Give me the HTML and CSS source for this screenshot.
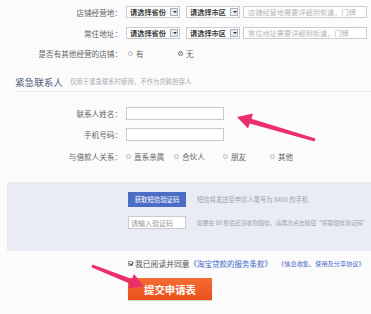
FILE: index.html
```html
<!DOCTYPE html>
<html lang="zh-CN">
<head>
<meta charset="utf-8">
<title>申请表</title>
<link rel="stylesheet" href="styles.css">
</head>
<body>
<div class="page">
  <div class="row r1">
    <div class="label">店铺经营地：</div>
    <div class="sel"><span>请选择省份</span><i class="dd"></i></div>
    <div class="sel sel2"><span>请选择市区</span><i class="dd"></i></div>
    <div class="inp addr ph">店铺经营地需要详细到街道，门牌</div>
  </div>
  <div class="row r2">
    <div class="label">常住地址：</div>
    <div class="sel"><span>请选择省份</span><i class="dd"></i></div>
    <div class="sel sel2"><span>请选择市区</span><i class="dd"></i></div>
    <div class="inp addr ph">常住地址需要详细到街道，门牌</div>
  </div>
  <div class="row r3">
    <div class="label">是否有其他经营的店铺：</div>
    <div class="opt o-yes"><i class="radio"></i>有</div>
    <div class="opt"><i class="radio on"></i>无</div>
  </div>

  <div class="sec-head">
    <span class="sec-title">紧急联系人</span>
    <span class="sec-sub">仅用于紧急联系时使用，不作为贷款担保人</span>
  </div>

  <div class="row r-name">
    <div class="label">联系人姓名：</div>
    <div class="inp short"></div>
  </div>
  <div class="row r-phone">
    <div class="label">手机号码：</div>
    <div class="inp short"></div>
  </div>
  <div class="row r-rel">
    <div class="label">与借款人关系：</div>
    <div class="opt o1"><i class="radio"></i>直系亲属</div>
    <div class="opt o2"><i class="radio"></i>合伙人</div>
    <div class="opt o3"><i class="radio"></i>朋友</div>
    <div class="opt"><i class="radio"></i>其他</div>
  </div>

  <div class="panel">
    <div class="prow">
      <div class="btn-code">获取短信验证码</div>
      <div class="tip">短信将发送至申请人尾号为 8400 的手机</div>
    </div>
    <div class="prow prow2">
      <div class="inp code ph">请输入验证码</div>
      <div class="tip tip2">如果在 60 秒后还没收到短信，请再次点击按钮“获取短信验证码”</div>
    </div>
  </div>

  <div class="agree">
    <i class="check"></i>
    <span class="agree-text">我已阅读并同意</span>
    <span class="link">《淘宝贷款的服务条款》</span>
    <span class="link small">《信息收集、使用及分享协议》</span>
  </div>

  <div class="submit">提交申请表</div>
</div>

<svg class="arrows" width="371" height="314" viewBox="0 0 371 314">
  <polygon fill="#ec2f6b" points="237,117 253,113.5 251.4,118.8 315.5,138.6 314.5,141.4 249.8,123.6 248,128.5"/>
  <polygon fill="#ec2f6b" points="144,286.5 128,288.5 130,283.8 91.4,267.2 92.6,264.6 131.9,279 134,274"/>
</svg>
</body>
</html>
```

FILE: styles.css
```css
* { box-sizing: border-box; margin: 0; padding: 0; }
html, body { width: 371px; height: 314px; overflow: hidden; }
body {
  background: #fbfbfc;
  font-family: "Noto Sans CJK SC", "Noto Sans", sans-serif;
  font-size: 7.6px;
  color: #666;
  position: relative;
}
.page { padding-top: 6px; }
.row { display: flex; align-items: center; height: 12px; white-space: nowrap; }
.label { width: 122px; text-align: right; margin-right: 4px; color: #666; flex: none; }
.r2 { margin-top: 9px; }
.r3 { margin-top: 8px; }

.sel {
  width: 54px; height: 12px; border: 1px solid #c9cbd0; background: #fff;
  display: flex; align-items: center; justify-content: space-between;
  padding-left: 3px; padding-right: 1px; color: #3a3a3a; font-weight: bold; font-size: 7.2px;
}
.sel2 { margin-left: 6px; }
.dd {
  width: 8px; height: 8px; border: 1px solid #aeb1b7; background: #e9eaec; position: relative; flex: none;
}
.dd::after {
  content: ""; position: absolute; left: 1.5px; top: 2px;
  border-left: 2px solid transparent; border-right: 2px solid transparent; border-top: 2.5px solid #333;
}
.inp { height: 12px; border: 1px solid #c9cbd0; background: #fff; display: flex; align-items: center; padding-left: 4px; }
.ph { color: #b3b5ba; font-size: 7.2px; }
.addr { width: 124px; margin-left: 3px; }

.opt { display: flex; align-items: center; color: #666; }
.radio {
  width: 5px; height: 5px; border-radius: 50%; border: 1px solid #b9bcc2; background: #f2f3f5;
  margin-right: 3px; flex: none; position: relative;
}
.radio.on { border-color: #888; background: #6f7580; box-shadow: inset 0 0 0 1px #fff; }
.o-yes { width: 50px; margin-left: 2px; }
.r-rel .opt:first-of-type { margin-left: 4px; }
.o1 { width: 48px; }
.o2 { width: 49px; }
.o3 { width: 47px; }

.sec-head {
  margin: 16px 0 0 15px; height: 17px; padding-bottom: 3px;
  border-bottom: 1px solid #eceef2; display: flex; align-items: center;
}
.sec-title { font-size: 9.6px; color: #4f5f7d; margin-right: 7px; }
.sec-sub { font-size: 6.4px; color: #a8acb4; }

.r-name { margin-top: 15px; height: 13px; }
.r-phone { margin-top: 8px; height: 13px; }
.short { width: 98px; height: 13px; }
.r-rel { margin-top: 9px; }

.panel {
  margin: 20px 0 0 7px; height: 69px; background: #e9ecf2;
  padding: 10px 0 0 121px;
}
.prow { display: flex; align-items: center; white-space: nowrap; height: 15px; }
.prow2 { margin-top: 9px; height: 13px; }
.btn-code {
  width: 58px; height: 15px; background: #4b6dc5; color: #fff; font-size: 6.4px;
  display: flex; align-items: center; justify-content: center; flex: none;
}
.code { width: 58px; height: 13px; color: #999; font-size: 7px; padding-left: 2px; flex: none; }
.tip { font-size: 6.3px; color: #9ea3ad; margin-left: 11px; }
.tip2 { font-size: 5.8px; }

.agree {
  margin: 6px 0 0 128px; height: 12px; display: flex; align-items: center; white-space: nowrap;
}
.check {
  width: 5px; height: 5px; border: 1px solid #9aa0a8; background: #fff; margin-right: 2px; position: relative; flex: none;
}
.check::after {
  content: ""; position: absolute; left: 0.5px; top: -0.5px; width: 1.5px; height: 2.5px;
  border-right: 1px solid #444; border-bottom: 1px solid #444; transform: rotate(40deg);
}
.agree-text { color: #555; font-size: 7.8px; }
.link { color: #3b68c4; font-size: 7.5px; }
.link.small { font-size: 6.2px; margin-left: 6px; }

.submit {
  margin: 9px 0 0 128px; width: 84px; height: 22px;
  background: linear-gradient(#f36d33, #e9501a);
  color: #fff; font-weight: bold; font-size: 10.4px;
  display: flex; align-items: center; justify-content: center;
  box-shadow: 0 1px 1px rgba(0,0,0,0.15);
}

.arrows { position: absolute; left: 0; top: 0; pointer-events: none; }
```
